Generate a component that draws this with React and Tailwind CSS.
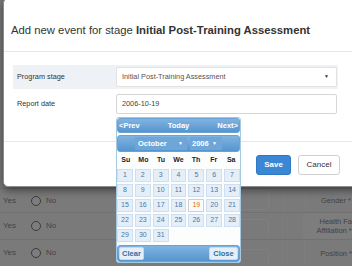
const dayNames = ["Su", "Mo", "Tu", "We", "Th", "Fr", "Sa"];
const days = Array.from({ length: 31 }, (_, i) => i + 1);

function BackgroundPage() {
  const rows = [
    { h: "h-[24px]", label: ["Gender *"], box: "mt-[1px] h-[20px]" },
    { h: "h-[27px]", label: ["Health Fa", "Affiliation *"], box: "mt-[6px] h-[22px]", shade: true },
    { h: "h-[27px]", label: ["Position *"], box: "mt-[9px] h-[22px]" },
  ];
  return (
    <div className="flex flex-col">
      <div className="h-[188px] bg-[#f4f4f4]" />
      {rows.map((r, i) => (
        <div key={i} className={`flex ${r.h} border-t border-[#e2e2e2] bg-[#f4f4f4]`}>
          <div className="flex w-[283px] items-start">
            <div className="flex h-full items-center gap-[5px] pl-[3px] text-[8px] text-[#8a8a8a]">
              <span>Yes</span>
              <span className="ml-[10px] h-[10px] w-[10px] rounded-full border border-[#777] bg-[#fafafa]" />
              <span>No</span>
            </div>
            <div className={`ml-[90px] w-[123px] rounded-[3px] border border-[#fff] bg-[#f4f4f4] ${r.box}`} />
          </div>
          <div className="w-[22px] border-l border-[#fafafa]" />
          <div
            className={`flex flex-1 flex-col justify-center whitespace-nowrap border-l border-[#fafafa] pl-[15px] text-[7.5px] leading-[9px] text-[#888] ${r.shade ? "bg-[#fafafa]" : ""}`}
          >
            {r.label.map((l, j) => (
              <span key={j} className={j === 1 ? "-ml-[3px]" : ""}>
                {l}
              </span>
            ))}
          </div>
        </div>
      ))}
    </div>
  );
}

function Modal() {
  return (
    <div className="absolute left-[3px] top-[-2px] w-[366px] rounded-[5px] border border-[#8c8c8c] bg-white shadow-[0_3px_9px_rgba(0,0,0,0.5)]">
      <div className="h-[53px] border-b border-[#e8e8e8] pl-[7px] pt-[25px]">
        <h4 className="text-[11.3px] leading-[13px] text-[#333]">
          Add new event for stage <span className="font-bold">Initial Post-Training Assessment</span>
        </h4>
      </div>

      <div className="pb-[25px] pl-[9px] pr-[30px] pt-[13px]">
        <div className="flex h-[23px] bg-[#eef1f6]">
          <div className="flex w-[103px] items-center pl-[4px] pt-[2px] text-[7.3px] text-[#333]">Program stage</div>
          <div className="mt-[2px] flex h-[20px] w-[221px] items-center justify-between rounded-[2px] border border-[#e2e2e2] bg-white pl-[5px] pr-[7px] text-[7.3px] text-[#555]">
            <span>Initial Post-Training Assessment</span>
            <span className="text-[5px] text-[#333]">▼</span>
          </div>
        </div>
        <div className="flex h-[28px] border-t border-[#f2f2f2]">
          <div className="flex w-[103px] items-center pl-[4px] pt-[4px] text-[7.3px] text-[#333]">Report date</div>
          <div className="mt-[5px] flex h-[20px] w-[221px] items-center rounded-[2px] border border-[#d6d6d6] bg-white pl-[5px] text-[7.3px] text-[#444]">
            2006-10-19
          </div>
        </div>
      </div>

      <div className="flex justify-end gap-[7px] border-t border-[#e8e8e8] pb-[11px] pr-[28px] pt-[13px]">
        <button className="h-[20px] w-[35px] rounded-[3px] border border-[#2f78c4] bg-[#3a87d6] text-[8px] font-bold text-white">
          Save
        </button>
        <button className="h-[20px] w-[42px] rounded-[3px] border border-[#d0d0d0] bg-white text-[8px] text-[#333]">
          Cancel
        </button>
      </div>
    </div>
  );
}

function DatePicker() {
  return (
    <div className="absolute left-[116px] top-[117px] w-[125px] rounded-[3px] border border-[#a6c9e2] bg-[#fcfdfd] text-[7px]">
      <div className="grid h-[15px] grid-cols-3 items-center rounded-[3px] border border-[#6ba1d3] bg-gradient-to-b from-[#80b3e0] to-[#5595cf] px-[1px] text-[7.5px] font-bold text-white">
        <span>&lt;Prev</span>
        <span className="text-center">Today</span>
        <span className="text-right">Next&gt;</span>
      </div>
      <div className="mt-[2px] flex h-[17px] items-center gap-[3px] rounded-[3px] border border-[#6ba1d3] bg-gradient-to-b from-[#80b3e0] to-[#5595cf] pl-[17px] text-[7.5px] font-bold text-white">
        <div className="flex h-[13px] w-[52px] items-center justify-between bg-[#6ea6d9] pl-[3px] pr-[4px]">
          <span>October</span>
          <span className="text-[5px]">▼</span>
        </div>
        <div className="flex h-[13px] w-[32px] items-center justify-between bg-[#6ea6d9] pl-[2px] pr-[5px]">
          <span>2006</span>
          <span className="text-[5px]">▼</span>
        </div>
      </div>
      <div className="grid h-[17px] grid-cols-7 items-center text-center font-bold text-[#222]">
        {dayNames.map((d) => (
          <span key={d}>{d}</span>
        ))}
      </div>
      <div className="grid grid-cols-7 gap-[2px]">
        {days.map((d) =>
          d === 19 ? (
            <div
              key={d}
              className="flex h-[13px] items-center justify-center border border-[#cfcfcf] bg-[#fbfbfb] text-[#e17009]"
            >
              {d}
            </div>
          ) : (
            <div
              key={d}
              className="flex h-[13px] items-center justify-center border border-[#cddff0] bg-[#e6eff8] text-[#4a79a5]"
            >
              {d}
            </div>
          )
        )}
      </div>
      <div className="mt-[3px] flex h-[17px] items-center justify-between rounded-[3px] border border-[#6ba1d3] bg-gradient-to-b from-[#80b3e0] to-[#5595cf] px-[1px] text-[7.5px] font-bold">
        <span className="flex h-[13px] w-[25px] items-center justify-center rounded-[2px] border border-[#c5dbec] bg-[#e6eff8] text-[#2e6e9e]">
          Clear
        </span>
        <span className="flex h-[13px] w-[29px] items-center justify-center rounded-[2px] border border-[#c5dbec] bg-[#e6eff8] text-[#2e6e9e]">
          Close
        </span>
      </div>
    </div>
  );
}

export default function App() {
  return (
    <div className="relative h-[266px] w-[352px] overflow-hidden bg-white font-['Liberation_Sans',Arial,sans-serif]">
      <BackgroundPage />
      <div className="absolute inset-0 bg-black/50" />
      <Modal />
      <DatePicker />
    </div>
  );
}
